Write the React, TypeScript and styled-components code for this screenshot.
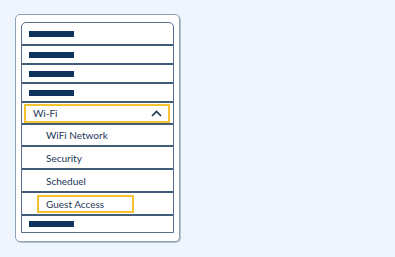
import React from "react";
import styled, { createGlobalStyle } from "styled-components";

type MenuItem =
  | { kind: "bar"; height: number }
  | { kind: "parent"; label: string; height: number }
  | { kind: "child"; label: string; height: number; active?: boolean };

const items: MenuItem[] = [
  { kind: "bar", height: 21 },
  { kind: "bar", height: 17 },
  { kind: "bar", height: 17 },
  { kind: "bar", height: 17 },
  { kind: "parent", label: "Wi-Fi", height: 20 },
  { kind: "child", label: "WiFi Network", height: 20 },
  { kind: "child", label: "Security", height: 21 },
  { kind: "child", label: "Scheduel", height: 21 },
  { kind: "child", label: "Guest Access", height: 21, active: true },
  { kind: "bar", height: 16 },
];

const App = () => {
  return (
    <>
      <GlobalStyle />
      <Page>
        <Frame>
          <List>
            {items.map((item, i) => (
              <Row key={i} $height={item.height} $last={i === items.length - 1}>
                {item.kind === "bar" && <Placeholder />}
                {item.kind === "parent" && (
                  <ParentBox>
                    <span>{item.label}</span>
                    <Chevron width="11" height="7" viewBox="0 0 11 7">
                      <path d="M1 6 L5.5 1.5 L10 6" />
                    </Chevron>
                  </ParentBox>
                )}
                {item.kind === "child" && (
                  <ChildLabel $active={item.active}>{item.label}</ChildLabel>
                )}
              </Row>
            ))}
          </List>
        </Frame>
      </Page>
    </>
  );
};

export default App;

const GlobalStyle = createGlobalStyle`
  html, body {
    margin: 0;
    padding: 0;
    background: #eef5fd;
  }
  body {
    font-family: Lato, "Open Sans", sans-serif;
  }
`;

const Page = styled.div`
  width: 395px;
  height: 257px;
  padding: 14px 0 0 15px;
  box-sizing: border-box;
`;

const Frame = styled.div`
  width: 165px;
  height: 228px;
  box-sizing: border-box;
  padding: 7px 5px 0 5px;

  background: #ffffff;
  border: 1px solid #8ea2b6;
  border-radius: 5px;
  box-shadow: 1px 1px 0 #b3c2d1;
`;

const List = styled.div`
  display: flex;
  flex-direction: column;

  border: 1px solid #56708b;
  border-radius: 5px 5px 0 0;
  background: #ffffff;
`;

const Row = styled.div<{ $height: number; $last?: boolean }>`
  display: flex;
  flex-direction: row;
  align-items: center;

  height: ${(p) => p.$height}px;
  border-bottom: ${(p) => (p.$last ? "none" : "2px solid #3f5c79")};
`;

const Placeholder = styled.div`
  width: 45px;
  height: 6px;
  margin-left: 7px;
  background: #0e335c;
`;

const ParentBox = styled.div`
  display: flex;
  flex-direction: row;
  justify-content: space-between;
  align-items: center;

  flex: 1;
  height: 19px;
  margin: 0 3px 0 2px;
  padding: 0 6px 0 7px;
  box-sizing: border-box;

  border: 2px solid #f6c232;
  font-size: 10px;
  color: #1d3657;
`;

const Chevron = styled.svg`
  fill: none;
  stroke: #1d3657;
  stroke-width: 1.6;
`;

const ChildLabel = styled.div<{ $active?: boolean }>`
  display: flex;
  align-items: center;

  height: 18px;
  margin-left: 15px;
  padding: 0 ${(p) => (p.$active ? "28px" : "0")} 0 7px;
  box-sizing: border-box;

  border: 2px solid ${(p) => (p.$active ? "#f6c232" : "transparent")};
  font-size: 10px;
  color: #1d3657;
`;
